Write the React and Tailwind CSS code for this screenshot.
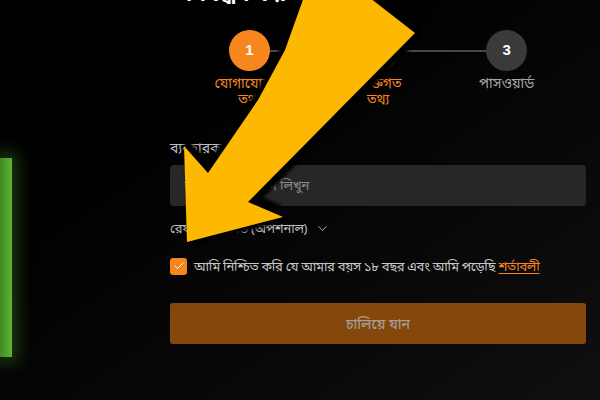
import React from 'react';
import { ChevronDown, Check } from 'lucide-react';

const steps = [
  { n: 1, label: 'যোগাযোগের তথ্য', active: true },
  { n: 2, label: 'ব্যক্তিগত তথ্য', active: true },
  { n: 3, label: 'পাসওয়ার্ড', active: false },
];

const ARROW = '310,-20 347,-20 415,33 248,202 283,217 187,242 184,146 208,173 258,100 285,50';

const Stepper = () => (
  <div className="relative flex px-[15px] mt-[26px]">
    {/* connecting line behind the circles */}
    <div className="absolute left-[80px] right-[80px] top-[20px] h-[2px] bg-[#474747]" />
    {steps.map((s) => (
      <div key={s.n} className="relative flex w-[129px] flex-col items-center">
        <div
          className={`flex h-[41px] w-[41px] items-center justify-center rounded-full text-[15px] font-bold text-white font-['Liberation_Sans',sans-serif] ${
            s.active ? 'bg-[#f7861e]' : 'bg-[#3a3a3a]'
          }`}
        >
          {s.n}
        </div>
        <p
          className={`mt-[4px] w-min text-center text-[14px] leading-[16px] ${
            s.active ? 'text-[#f7861e]' : 'text-[#a8a8a8]'
          }`}
        >
          {s.label}
        </p>
      </div>
    ))}
  </div>
);

// big yellow pointer drawn over the form, with its dark cast shadow
const Arrow = () => (
  <svg
    className="pointer-events-none absolute inset-0 z-20 overflow-visible"
    width="600"
    height="400"
    viewBox="0 0 600 400"
  >
    <defs>
      <filter id="soft" x="-10%" y="-10%" width="120%" height="120%">
        <feGaussianBlur stdDeviation="1.5" />
      </filter>
    </defs>
    <g fill="#000" filter="url(#soft)">
      <polygon points="355,-10 452,-10 415,33" />
      <polygon points={ARROW} transform="translate(9,2)" />
      <polygon points={ARROW} transform="translate(0,-11)" />
    </g>
    <polygon points={ARROW} fill="#fdb902" />
  </svg>
);

export default function App() {
  return (
    <div className="relative h-[400px] w-[600px] overflow-hidden bg-gradient-to-br from-black via-[#050505] to-[#101010] font-['Noto_Sans','Noto_Sans_Bengali',sans-serif]">
      {/* green glow decoration on the left edge */}
      <div className="absolute left-0 top-[158px] h-[199px] w-[12px] bg-gradient-to-r from-[#3f8a22] to-[#62b236] shadow-[0_0_16px_6px_rgba(80,160,40,0.35)]" />

      <div className="ml-[170px] flex w-[416px] flex-col">
        <h1 className="-mt-[20px] h-[24px] pl-[16px] text-[22px] font-bold leading-[24px] text-white">
          নিবন্ধন করুন
        </h1>

        <Stepper />

        {/* username */}
        <label className="mt-[31px] text-[14px] leading-[20px] text-[#bdbdbd]">ব্যবহারকারীর নাম</label>
        <div className="mt-[7px] flex h-[41px] items-center rounded-[4px] bg-[#272727] px-[14px] text-[13px] text-[#8a8a8a]">
          ব্যবহারকারীর নাম লিখুন
        </div>

        {/* referral */}
        <div className="mt-[12px] flex items-center gap-[8px] text-[13px] leading-[20px] tracking-[-0.3px] text-[#bdbdbd]">
          রেফারেল কোড (অপশনাল)
          <ChevronDown size={15} strokeWidth={1.5} className="text-[#bdbdbd]" />
        </div>

        {/* terms */}
        <div className="mt-[19px] flex items-center gap-[7px] text-[13px] leading-[18px] tracking-[-0.3px] text-[#c8c8c8]">
          <span className="flex h-[17px] w-[17px] shrink-0 items-center justify-center rounded-[3px] bg-[#f7861e]">
            <Check size={12} strokeWidth={2} className="text-white" />
          </span>
          <span>
            আমি নিশ্চিত করি যে আমার বয়স ১৮ বছর এবং আমি পড়েছি{' '}
            <span className="text-[#f7861e] underline underline-offset-2">শর্তাবলী</span>
          </span>
        </div>

        <button className="mt-[28px] h-[41px] rounded-[3px] bg-[#84480c] text-[14px] font-medium text-[#a69c8f]">
          চালিয়ে যান
        </button>
      </div>

      <Arrow />
    </div>
  );
}
